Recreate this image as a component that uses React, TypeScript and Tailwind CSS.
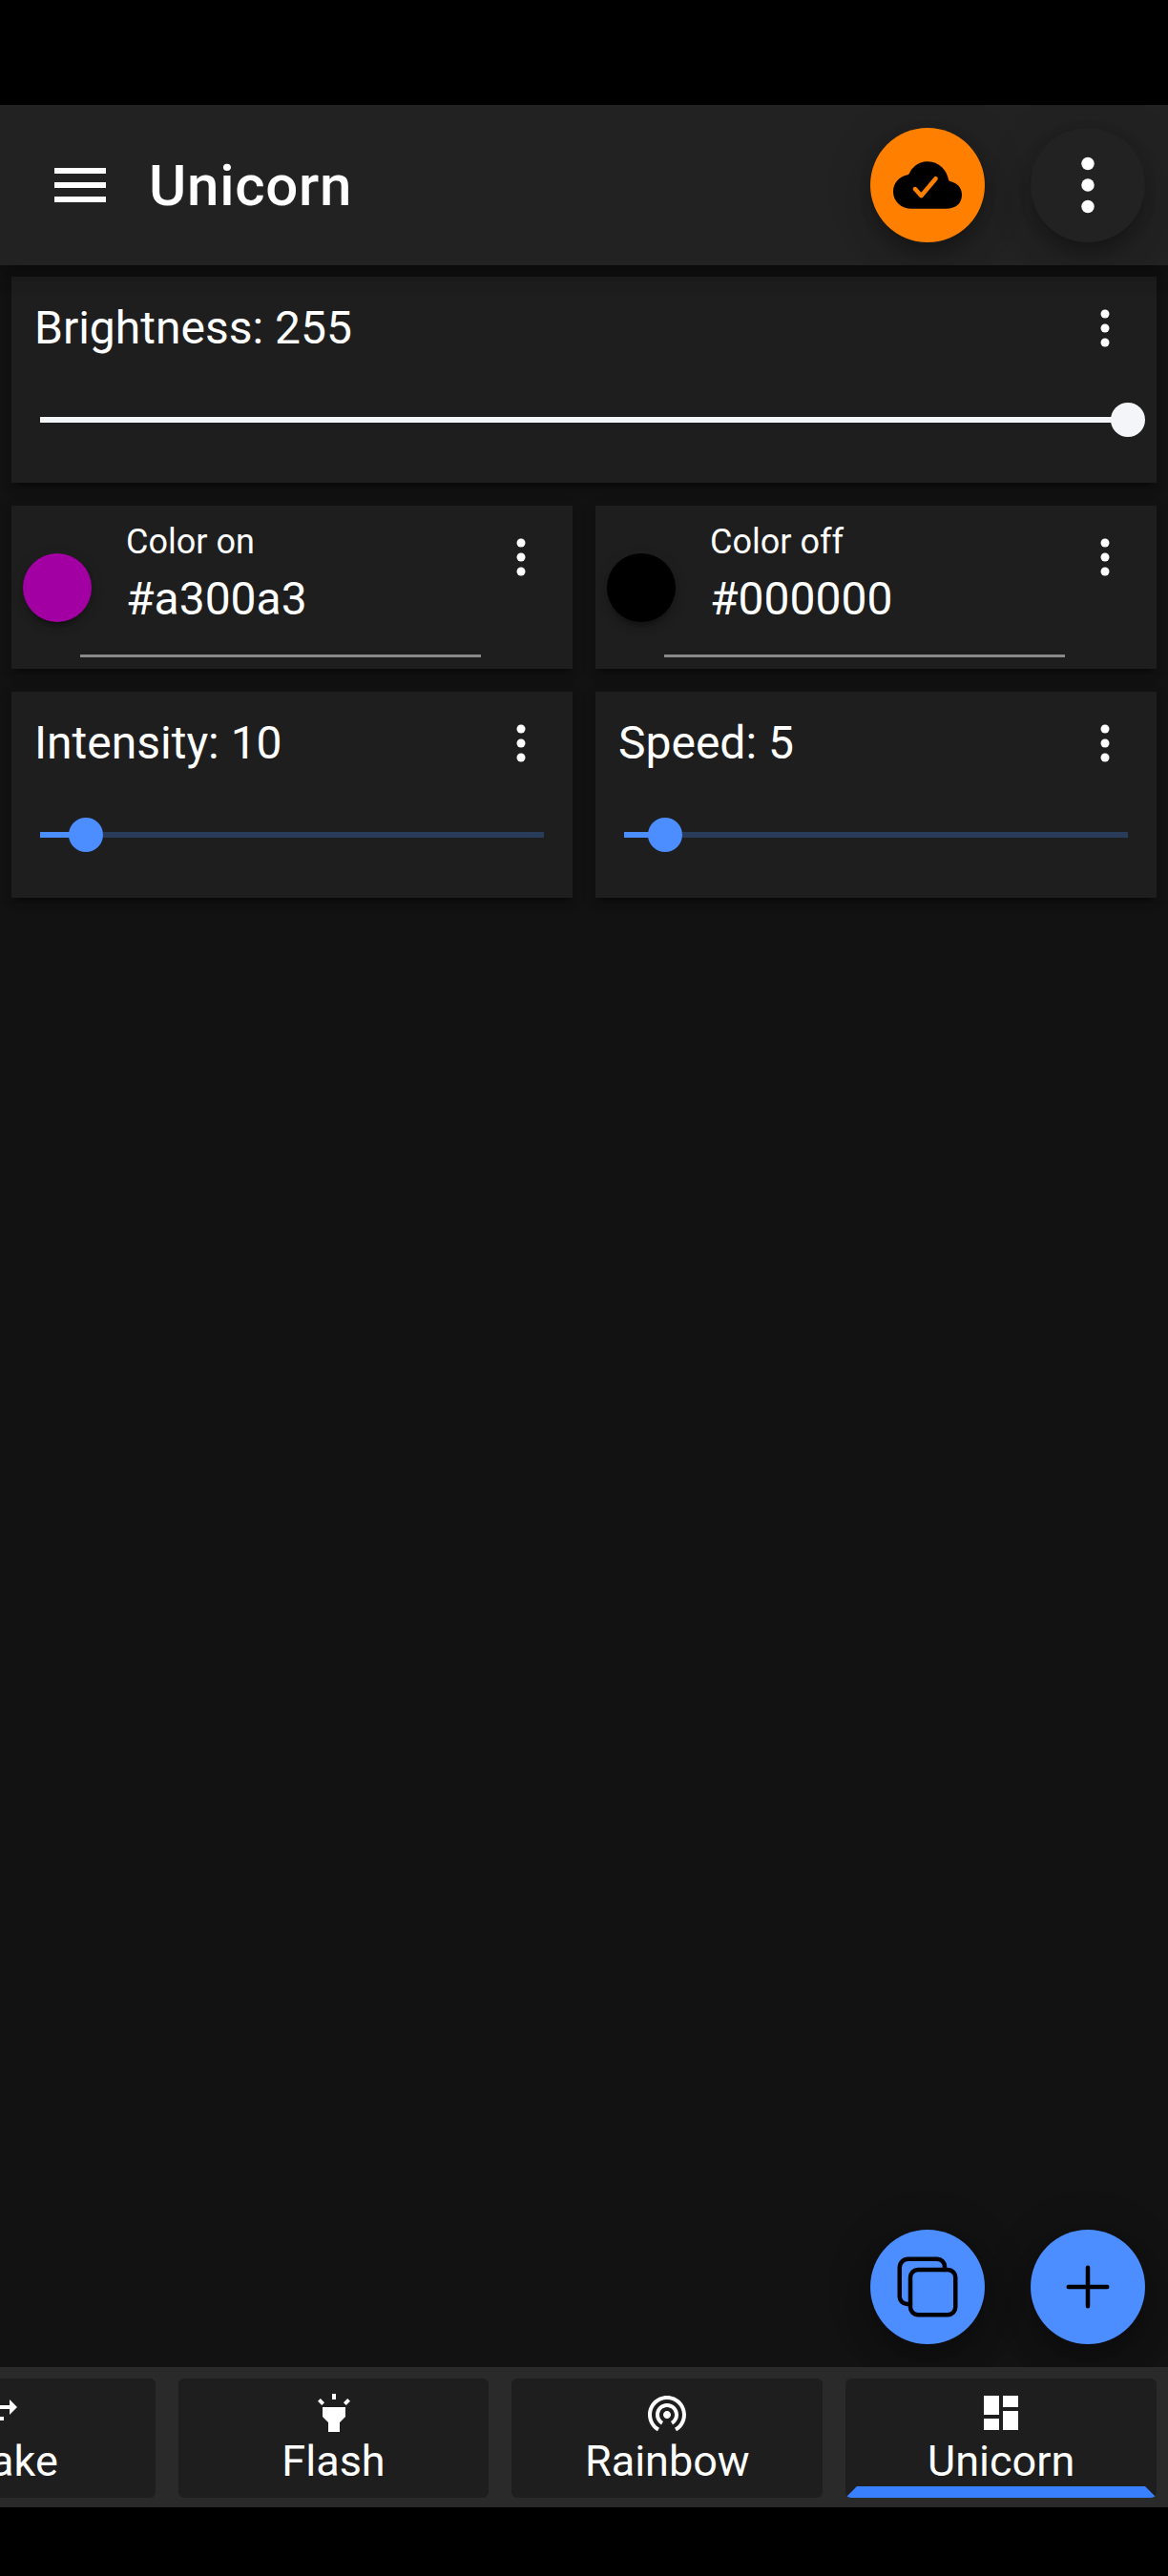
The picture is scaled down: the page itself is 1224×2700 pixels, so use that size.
import type { ReactNode } from "react";
import { IoAdd, IoCloudDone, IoCopyOutline, IoEllipsisVertical } from "react-icons/io5";
import { MdDashboard, MdHighlight, MdMenu, MdSwapHoriz, MdWifiTethering } from "react-icons/md";

const CARD =
  "bg-[#1e1e1e] shadow-[0_9px_3px_-6px_rgba(0,0,0,0.2),0_6px_6px_0_rgba(0,0,0,0.14),0_3px_15px_0_rgba(0,0,0,0.12)]";

function Fab({ className, children }: { className: string; children: ReactNode }) {
  return (
    <button
      className={`flex size-[120px] items-center justify-center rounded-full shadow-[0_9px_15px_-3px_rgba(0,0,0,0.2),0_18px_30px_0_rgba(0,0,0,0.14),0_3px_54px_0_rgba(0,0,0,0.12)] ${className}`}
    >
      {children}
    </button>
  );
}

function SliderCard({
  label,
  value,
  percent,
  light = false,
}: {
  label: string;
  value: number;
  percent: number;
  light?: boolean;
}) {
  const tone = light ? "bg-[#f4f5f8]" : "bg-[#4c8dff]";
  return (
    <section className={`h-[216px] ${CARD}`}>
      <div className="flex h-[108px] items-center justify-between pl-6 pr-[30px]">
        <span className="text-[48px] leading-[56px]">
          {label}: {value}
        </span>
        <IoEllipsisVertical className="size-12" />
      </div>
      <div className="flex h-[84px] items-center px-[30px]">
        <div className="relative h-[6px] w-full bg-[#293c5a]">
          <div className={`h-full ${tone}`} style={{ width: `${percent}%` }} />
          <div
            className={`absolute top-1/2 size-9 -translate-x-1/2 -translate-y-1/2 rounded-full ${tone}`}
            style={{ left: `${percent}%` }}
          />
        </div>
      </div>
    </section>
  );
}

function ColorCard({ label, value, swatch }: { label: string; value: string; swatch: string }) {
  return (
    <section className={`flex h-[171px] justify-between pl-3 pr-[30px] ${CARD}`}>
      <div className="flex">
        <div
          className={`mt-[50px] size-[72px] shrink-0 rounded-full shadow-[0_9px_3px_-6px_rgba(0,0,0,0.2),0_6px_6px_0_rgba(0,0,0,0.14),0_3px_15px_0_rgba(0,0,0,0.12)] ${swatch}`}
        />
        <div className="-ml-3 mb-3 flex w-[420px] flex-col border-b-[3px] border-[#898989] pl-12 pt-[17px]">
          <span className="text-[36px] leading-[42px]">{label}</span>
          <span className="mt-[11px] text-[48px] leading-[56px]">{value}</span>
        </div>
      </div>
      <IoEllipsisVertical className="mt-[30px] size-12" />
    </section>
  );
}

function Tab({ icon, label, active = false }: { icon: ReactNode; label: string; active?: boolean }) {
  return (
    <div
      role="tab"
      aria-selected={active}
      className={`flex h-[125px] w-[325.8px] shrink-0 flex-col items-center justify-start rounded-[6px] border-x-[12px] border-b-[12px] border-x-transparent bg-[#1e1e1e] pt-3 ${
        active ? "border-b-[#3880ff]" : "border-b-transparent"
      }`}
    >
      <div className="size-12 shrink-0">{icon}</div>
      <span className="shrink-0 text-[45px] leading-[54px]">{label}</span>
    </div>
  );
}

export default function App() {
  return (
    <div className="flex h-[2700px] w-[1224px] flex-col overflow-hidden bg-black pb-[72px] pt-[110px] font-[Roboto,sans-serif] text-white">
      <header className="relative z-10 flex h-[168px] shrink-0 items-center overflow-hidden bg-[#222222] pl-12 pr-6 shadow-[0_6px_12px_-3px_rgba(0,0,0,0.2),0_12px_15px_0_rgba(0,0,0,0.14),0_3px_30px_0_rgba(0,0,0,0.12)]">
        <MdMenu className="size-[72px]" />
        <h1 className="ml-9 mt-0.5 flex-1 text-[60px] font-medium leading-[70px] tracking-[0.0125em]">Unicorn</h1>
        <div className="flex gap-12">
          <Fab className="bg-[#ff8000] text-black">
            <IoCloudDone className="size-[72px]" />
          </Fab>
          <Fab className="bg-[#222222] text-white">
            <IoEllipsisVertical className="size-[72px]" />
          </Fab>
        </div>
      </header>

      <main className="flex flex-1 flex-col justify-between bg-[#121212]">
        <div className="flex flex-col gap-6 p-3">
          <SliderCard label="Brightness" value={255} percent={100} light />
          <div className="grid grid-cols-2 gap-6">
            <ColorCard label="Color on" value="#a300a3" swatch="bg-[#a300a3]" />
            <ColorCard label="Color off" value="#000000" swatch="bg-black" />
            <SliderCard label="Intensity" value={10} percent={9.09} />
            <SliderCard label="Speed" value={5} percent={8.16} />
          </div>
        </div>
        <div className="flex justify-end gap-12 pb-6 pr-6">
          <Fab className="bg-[#4c8dff] text-black">
            <IoCopyOutline className="size-[72px]" />
          </Fab>
          <Fab className="bg-[#4c8dff] text-black">
            <IoAdd className="size-[72px]" />
          </Fab>
        </div>
      </main>

      <footer role="tablist" className="relative flex h-[147px] shrink-0 justify-end gap-6 bg-[#2a2a2a] px-3 pt-3">
        <Tab icon={<MdSwapHoriz className="size-12" />} label="Shake" />
        <Tab icon={<MdHighlight className="size-12" />} label="Flash" />
        <Tab icon={<MdWifiTethering className="size-12" />} label="Rainbow" />
        <Tab icon={<MdDashboard className="size-12" />} label="Unicorn" active />
      </footer>
    </div>
  );
}
